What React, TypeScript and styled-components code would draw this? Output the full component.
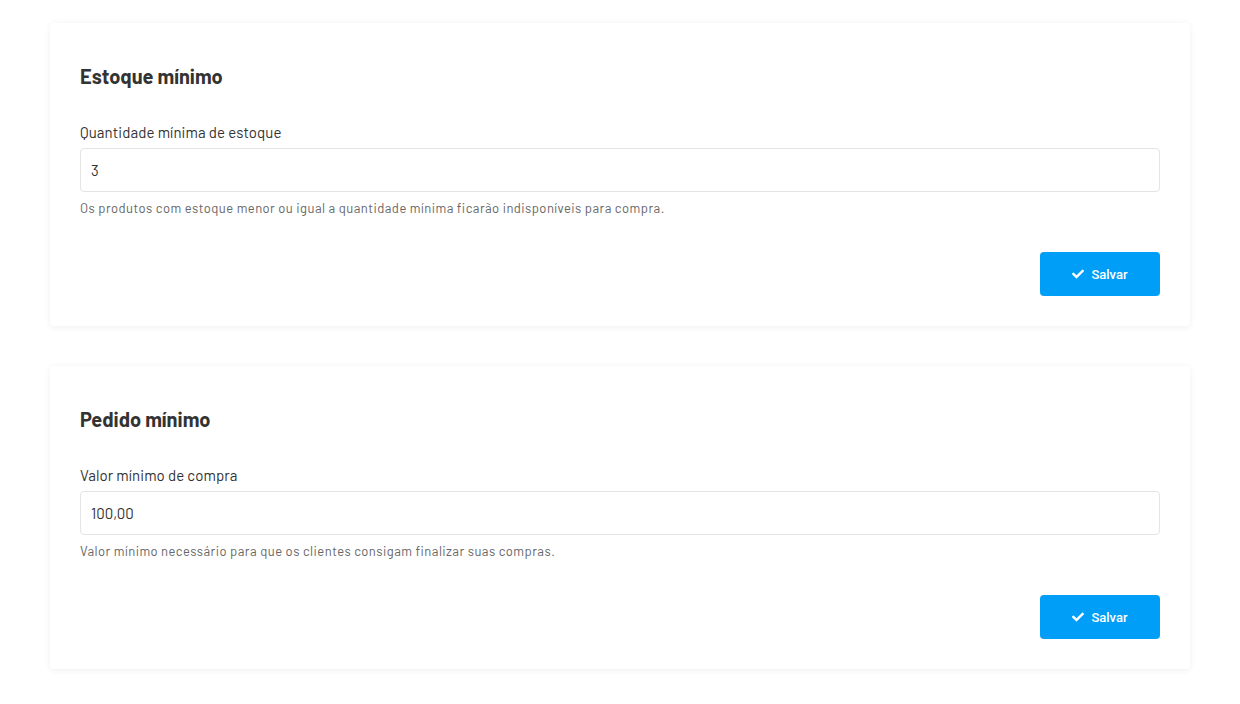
import React, { useState } from 'react';
import styled, { createGlobalStyle } from 'styled-components';
import { FaCheck } from 'react-icons/fa';

const GlobalStyle = createGlobalStyle`
  html, body {
    margin: 0;
    padding: 0;
    background: #ffffff;
    font-family: "Barlow", "Roboto", "Liberation Sans", sans-serif;
    color: #333333;
  }
`;

const Page = styled.div`
  display: flex;
  flex-direction: column;
  gap: 40px;
  padding: 23px 50px 36px;
`;

const Card = styled.section`
  background: #fff;
  border-radius: 4px;
  box-shadow: 0 1px 6px rgba(0, 0, 0, 0.07);
  padding: 41px 30px 30px;
  display: flex;
  flex-direction: column;
`;

const Title = styled.h2`
  margin: 0 0 34px;
  font-size: 20px;
  line-height: 24px;
  font-weight: 700;
  color: #333;
`;

const Label = styled.label`
  font-size: 15px;
  line-height: 20px;
  font-weight: 400;
  letter-spacing: 0.08px;
  color: #333;
  margin-bottom: 6px;
`;

const Input = styled.input`
  box-sizing: border-box;
  height: 44px;
  width: 100%;
  border: 1px solid #e4e4e4;
  border-radius: 4px;
  padding: 0 10px;
  font-family: inherit;
  font-size: 15px;
  color: #333;
  outline: none;
`;

const Help = styled.p`
  margin: 8px 0 0;
  font-size: 13px;
  line-height: 16px;
  letter-spacing: 0.45px;
  color: #666;
`;

const Actions = styled.div`
  display: flex;
  justify-content: flex-end;
  margin-top: 36px;
`;

const SaveButton = styled.button`
  display: flex;
  align-items: center;
  justify-content: center;
  gap: 7px;
  width: 120px;
  height: 44px;
  border: none;
  border-radius: 4px;
  background: #009ef7;
  color: #fff;
  font-family: "Roboto", sans-serif;
  font-size: 13px;
  font-weight: 500;
  cursor: pointer;
`;

type SettingProps = {
  title: string;
  label: string;
  help: string;
  initial: string;
};

const SettingCard: React.FC<SettingProps> = ({ title, label, help, initial }) => {
  const [value, setValue] = useState(initial);
  return (
    <Card>
      <Title>{title}</Title>
      <Label>{label}</Label>
      <Input value={value} onChange={(e) => setValue(e.target.value)} />
      <Help>{help}</Help>
      <Actions>
        <SaveButton>
          <FaCheck size={12} />
          Salvar
        </SaveButton>
      </Actions>
    </Card>
  );
};

const App: React.FC = () => {
  return (
    <>
      <GlobalStyle />
      <Page>
        <SettingCard
          title="Estoque mínimo"
          label="Quantidade mínima de estoque"
          help="Os produtos com estoque menor ou igual a quantidade mínima ficarão indisponíveis para compra."
          initial="3"
        />
        <SettingCard
          title="Pedido mínimo"
          label="Valor mínimo de compra"
          help="Valor mínimo necessário para que os clientes consigam finalizar suas compras."
          initial="100,00"
        />
      </Page>
    </>
  );
};

export default App;
